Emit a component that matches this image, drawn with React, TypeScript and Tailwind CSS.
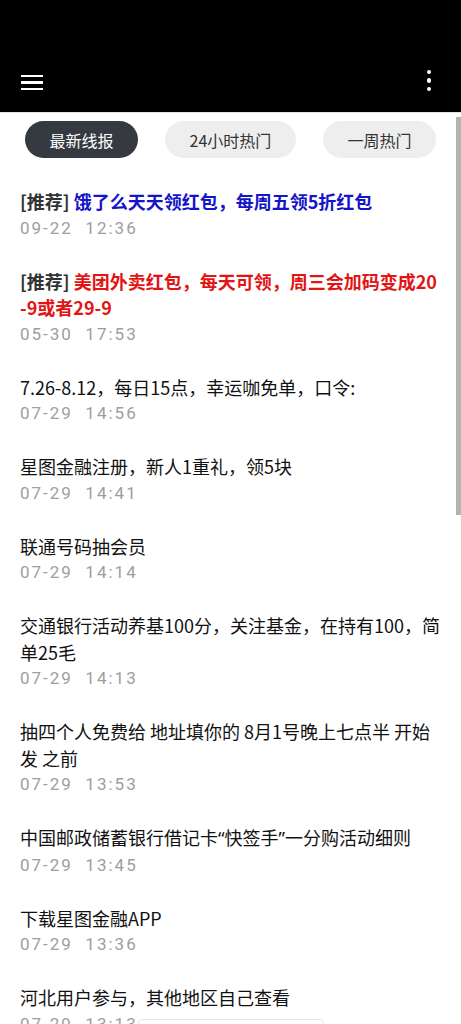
import React from "react";

type Item = { tag?: boolean; color?: string; title: React.ReactNode; date: string };

const q = (s: string) => <span style={{ fontFamily: '"Noto Sans", sans-serif' }}>{s}</span>;

const items: Item[] = [
  { tag: true, color: "text-[#1414c8]", title: "饿了么天天领红包，每周五领5折红包", date: "09-22  12:36" },
  { tag: true, color: "text-[#e21414]", title: "美团外卖红包，每天可领，周三会加码变成20\u200B-9或者29-9", date: "05-30  17:53" },
  { title: "7.26-8.12，每日15点，幸运咖免单，口令:", date: "07-29  14:56" },
  { title: "星图金融注册，新人1重礼，领5块", date: "07-29  14:41" },
  { title: "联通号码抽会员", date: "07-29  14:14" },
  { title: "交通银行活动养基100分，关注基金，在持有100，简单25毛", date: "07-29  14:13" },
  { title: "抽四个人免费给 地址填你的 8月1号晚上七点半 开始发 之前", date: "07-29  13:53" },
  {
    title: (
      <>
        中国邮政储蓄银行借记卡{q("“")}快签手{q("”")}一分购活动细则
      </>
    ),
    date: "07-29  13:45",
  },
  { title: "下载星图金融APP", date: "07-29  13:36" },
  { title: "河北用户参与，其他地区自己查看", date: "07-29  13:13" },
];

export default function App() {
  return (
    <div
      className="relative w-[461px] h-[1024px] overflow-hidden bg-white"
      style={{ fontFamily: '"Noto Sans CJK SC", "Noto Sans", sans-serif' }}
    >
      <div className="h-[112px] bg-black flex items-end pb-[22px] px-[21px] justify-between">
        <div className="flex flex-col gap-[4px] w-[22px]">
          <div className="h-[2.5px] bg-white" />
          <div className="h-[2.5px] bg-white" />
          <div className="h-[2.5px] bg-white" />
        </div>
        <div className="flex flex-col gap-[4px] items-center mr-[9px] mb-[-1px]">
          <div className="w-[4.5px] h-[4.5px] rounded-full bg-white" />
          <div className="w-[4.5px] h-[4.5px] rounded-full bg-white" />
          <div className="w-[4.5px] h-[4.5px] rounded-full bg-white" />
        </div>
      </div>
      <div className="h-px bg-[#e4e4e4]" />
      <div className="flex justify-between px-[25px] pt-[8px]">
        <div className="h-[37px] px-[24.5px] rounded-full bg-[#343a40] text-white text-[16px] flex items-center">最新线报</div>
        <div className="h-[37px] px-[24.5px] rounded-full bg-[#eeeeee] text-[#333] text-[16px] flex items-center">24小时热门</div>
        <div className="h-[37px] px-[24.5px] rounded-full bg-[#eeeeee] text-[#333] text-[16px] flex items-center">一周热门</div>
      </div>
      <div className="pt-[30px] pl-[20px] pr-[20px]">
        {items.map((it, i) => (
          <div key={i} className="pb-[26.5px]">
            <div className="text-[18px] leading-[26.5px] text-[#111]">
              {it.tag ? (
                <span className="font-bold">
                  <span className="text-[#333]">[推荐] </span>
                  <span className={it.color}>{it.title}</span>
                </span>
              ) : (
                it.title
              )}
            </div>
            <div
              className="text-[17px] leading-[26.5px] text-[#9e9e9e] tracking-[2px] whitespace-pre"
              style={{ fontFamily: 'Roboto, "Noto Sans", sans-serif' }}
            >
              {it.date}
            </div>
          </div>
        ))}
      </div>
      <div className="absolute right-0 top-[117px] w-[5px] h-[398px] bg-[#b3b3b3]" />
      <div className="absolute left-[138px] top-[1019px] w-[186px] h-[12px] rounded-[4px] border border-[#e6e6e6] bg-white/60" />
    </div>
  );
}
